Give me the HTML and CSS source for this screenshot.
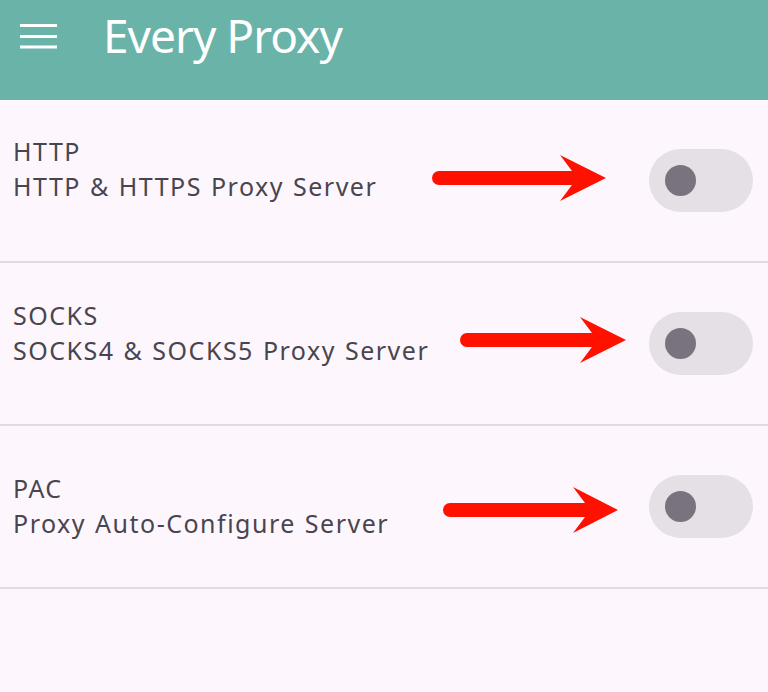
FILE: index.html
```html
<!DOCTYPE html>
<html lang="en">
<head>
<meta charset="utf-8">
<title>Every Proxy</title>
<link rel="stylesheet" href="styles.css">
</head>
<body>
<header class="appbar">
  <svg class="menu" width="37" height="25" viewBox="0 0 37 25">
    <rect x="0" y="0" width="37" height="3" fill="#fff"/>
    <rect x="0" y="11" width="37" height="3" fill="#fff"/>
    <rect x="0" y="21.5" width="37" height="3" fill="#fff"/>
  </svg>
  <h1 class="title">Every Proxy</h1>
</header>
<main class="list">
  <div class="row">
    <div class="text raised">
      <div class="headline">HTTP</div>
      <div class="support">HTTP &amp; HTTPS Proxy Server</div>
    </div>
    <div class="switch"><span class="thumb"></span></div>
    <svg class="arrow arrow-1" width="174" height="48" viewBox="0 0 174 48"><path d="M7,17 H140 L128,1 L174,24 L128,47 L140,31 H7 A7,7 0 0 1 7,17 Z" fill="#ff1100"/></svg>
  </div>
  <div class="row">
    <div class="text raised2">
      <div class="headline">SOCKS</div>
      <div class="support">SOCKS4 &amp; SOCKS5 Proxy Server</div>
    </div>
    <div class="switch"><span class="thumb"></span></div>
    <svg class="arrow arrow-2" width="166" height="48" viewBox="0 0 166 48"><path d="M7,17 H132 L120,1 L166,24 L120,47 L132,31 H7 A7,7 0 0 1 7,17 Z" fill="#ff1100"/></svg>
  </div>
  <div class="row">
    <div class="text raised3">
      <div class="headline">PAC</div>
      <div class="support">Proxy Auto-Configure Server</div>
    </div>
    <div class="switch"><span class="thumb"></span></div>
    <svg class="arrow arrow-3" width="175" height="48" viewBox="0 0 175 48"><path d="M7,17 H142 L130,1 L175,24 L130,47 L142,31 H7 A7,7 0 0 1 7,17 Z" fill="#ff1100"/></svg>
  </div>
</main>
</body>
</html>
```
FILE: styles.css
```css
html, body {
  margin: 0;
  padding: 0;
}
body {
  background: #fdf7fd;
  font-family: "Noto Sans", Roboto, sans-serif;
  width: 768px;
  height: 692px;
  overflow: hidden;
}
.appbar {
  height: 100px;
  background: #6ab3a9;
  display: flex;
  align-items: flex-start;
  box-sizing: border-box;
}
.menu {
  margin: 24px 0 0 20px;
  flex: none;
}
.title {
  margin: 0 0 0 46px;
  font-family: "Noto Sans", Roboto, sans-serif;
  font-weight: 400;
  font-size: 46px;
  line-height: 54px;
  padding-top: 8px;
  color: #ffffff;
  letter-spacing: -1px;
}
.list {
  display: flex;
  flex-direction: column;
}
.row {
  position: relative;
  height: 161px;
  border-bottom: 2px solid #e0dbe1;
  display: flex;
  align-items: center;
  justify-content: space-between;
  padding: 0 15px 0 13px;
}
.text {
  display: flex;
  flex-direction: column;
}
.text.raised {
  margin-bottom: 24px;
}
.text.raised2 {
  margin-bottom: 21px;
}
.text.raised3 {
  margin-bottom: 2px;
}
.headline,
.support {
  font-size: 25px;
  line-height: 35px;
  color: #49454f;
  letter-spacing: 1.5px;
  word-spacing: 1px;
}
.switch {
  width: 104px;
  height: 63px;
  border-radius: 32px;
  background: #e4e0e6;
  display: flex;
  align-items: center;
  box-sizing: border-box;
  padding-left: 16px;
}
.thumb {
  width: 31px;
  height: 31px;
  border-radius: 50%;
  background: #78737d;
}
.arrow {
  position: absolute;
}
.arrow-1 { left: 432px; top: 54px; }
.arrow-2 { left: 460px; top: 53px; }
.arrow-3 { left: 443px; top: 60px; }
```
